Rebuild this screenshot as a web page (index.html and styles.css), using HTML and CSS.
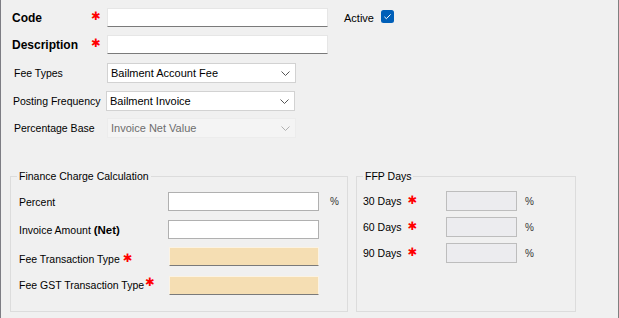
FILE: index.html
```html
<!DOCTYPE html>
<html>
<head>
<meta charset="utf-8">
<link rel="stylesheet" href="styles.css">
</head>
<body>
<div class="window">
  <div class="row row-code">
    <span class="lbl-main bold">Code</span>
    <span class="req req-main">✱</span>
    <span class="txt txt-main"></span>
    <span class="active-lbl">Active</span>
    <span class="chk">
      <svg width="13" height="13" viewBox="0 0 13 13"><rect x="0" y="0" width="13" height="13" rx="2.5" fill="#005fb8"/><path d="M3.4 6.8 L5.4 8.7 L9.6 4.4" fill="none" stroke="#fff" stroke-width="1"/></svg>
    </span>
  </div>
  <div class="row row-desc">
    <span class="lbl-main bold">Description</span>
    <span class="req req-main">✱</span>
    <span class="txt txt-main"></span>
  </div>

  <div class="row row-combo r1">
    <span class="lbl-combo">Fee Types</span>
    <span class="combo"><span class="combo-text">Bailment Account Fee</span><svg class="chev" width="9" height="5" viewBox="0 0 9 5"><path d="M0.5 0.5 L4.5 4.5 L8.5 0.5" fill="none" stroke="#555" stroke-width="1"/></svg></span>
  </div>
  <div class="row row-combo r2">
    <span class="lbl-combo pf">Posting Frequency</span>
    <span class="combo"><span class="combo-text">Bailment Invoice</span><svg class="chev" width="9" height="5" viewBox="0 0 9 5"><path d="M0.5 0.5 L4.5 4.5 L8.5 0.5" fill="none" stroke="#555" stroke-width="1"/></svg></span>
  </div>
  <div class="row row-combo r3">
    <span class="lbl-combo">Percentage Base</span>
    <span class="combo disabled"><span class="combo-text">Invoice Net Value</span><svg class="chev" width="9" height="5" viewBox="0 0 9 5"><path d="M0.5 0.5 L4.5 4.5 L8.5 0.5" fill="none" stroke="#b0b0b0" stroke-width="1"/></svg></span>
  </div>

  <div class="groups">
    <div class="group group-fin">
      <span class="legend">Finance Charge Calculation</span>
      <div class="grow g1">
        <span class="lbl-fin">Percent</span>
        <span class="txt txt-box"></span>
        <span class="pct">%</span>
      </div>
      <div class="grow g2">
        <span class="lbl-fin">Invoice Amount <b class="net">(Net)</b></span>
        <span class="txt txt-box"></span>
      </div>
      <div class="grow g3">
        <span class="lbl-fin low">Fee Transaction Type <span class="req">✱</span></span>
        <span class="txt txt-wheat"></span>
      </div>
      <div class="grow g4">
        <span class="lbl-fin">Fee GST Transaction Type<span class="req tight">✱</span></span>
        <span class="txt txt-wheat"></span>
      </div>
    </div>
    <div class="group group-ffp">
      <span class="legend">FFP Days</span>
      <div class="frow f1">
        <span class="lbl-ffp">30 Days <span class="req">✱</span></span>
        <span class="txt txt-ffp"></span>
        <span class="pct">%</span>
      </div>
      <div class="frow f2">
        <span class="lbl-ffp">60 Days <span class="req">✱</span></span>
        <span class="txt txt-ffp"></span>
        <span class="pct">%</span>
      </div>
      <div class="frow f3">
        <span class="lbl-ffp">90 Days <span class="req">✱</span></span>
        <span class="txt txt-ffp"></span>
        <span class="pct">%</span>
      </div>
    </div>
  </div>
</div>
</body>
</html>
```

FILE: styles.css
```css
html, body {
  margin: 0;
  padding: 0;
  background: #f0f0f0;
}
.window {
  width: 619px;
  height: 318px;
  box-sizing: border-box;
  border-left: 1px solid #7d7d84;
  border-right: 1px solid #808080;
  background: #f0f0f0;
  font-family: "Liberation Sans", Arial, sans-serif;
  font-size: 10.5px;
  color: #000;
  overflow: hidden;
}
.row {
  display: flex;
  align-items: center;
}
.bold {
  font-weight: bold;
  font-size: 12px;
}
.row-code {
  margin-top: 8px;
  height: 19px;
}
.row-desc {
  margin-top: 8px;
  height: 19px;
}
.lbl-main {
  width: 79px;
  padding-left: 11px;
  flex: none;
}
.req {
  color: #ff0000;
  font-family: "DejaVu Sans", sans-serif;
  font-size: 11.5px;
  font-weight: bold;
  position: relative;
  top: -1px;
  line-height: 1;
}
.req-main {
  width: 16px;
  flex: none;
}
.tight {
  margin-left: 1px;
  top: -3px;
}
.txt {
  display: block;
  box-sizing: border-box;
  flex: none;
}
.txt-main {
  width: 221px;
  height: 19px;
  background: #fff;
  border: 1px solid #e6e6e6;
  border-bottom: 1px solid #7a7a7a;
}
.active-lbl {
  margin-left: 16px;
  font-size: 11px;
}
.chk {
  display: block;
  margin-left: 7px;
  height: 13px;
  position: relative;
  top: -1px;
}
.chk svg { display: block; }

.row-combo {
  height: 20px;
}
.r1 { margin-top: 9px; }
.r2 { margin-top: 8px; }
.r3 { margin-top: 7px; }
.lbl-combo {
  width: 93px;
  padding-left: 13px;
  flex: none;
}
.lbl-combo.pf {
  padding-left: 12px;
}
.combo {
  width: 189px;
  height: 20px;
  box-sizing: border-box;
  background: #fff;
  border: 1px solid #d2d2d2;
  display: flex;
  align-items: center;
  justify-content: space-between;
  padding: 0 5px 0 3px;
  flex: none;
}
.combo-text {
  font-size: 11px;
}
.combo.disabled {
  background: #f4f4f4;
  border-color: #ececec;
  color: #6d6d6d;
}
.chev { display: block; }

.groups {
  display: flex;
  gap: 8px;
  margin-top: 38px;
  padding-left: 9px;
}
.group {
  position: relative;
  box-sizing: border-box;
  height: 136px;
  border: 1px solid #dcdcdc;
}
.group-fin {
  width: 338px;
  padding: 15px 0 0 8px;
}
.group-ffp {
  width: 220px;
  padding: 14px 0 0 6px;
}
.legend {
  position: absolute;
  top: -8px;
  left: 6px;
  padding: 0 2px;
  background: #f0f0f0;
  line-height: 14px;
}
.grow, .frow {
  display: flex;
  align-items: center;
}
.grow { height: 19px; }
.g2 { margin-top: 9px; }
.g3 { margin-top: 8px; }
.g4 { margin-top: 10px; }
.lbl-fin {
  width: 149px;
  flex: none;
  white-space: nowrap;
}
.lbl-fin.low {
  padding-top: 6px;
}
.net {
  font-size: 11.5px;
}
.txt-box {
  width: 151px;
  height: 19px;
  background: #fff;
  border: 1px solid #b0b0b0;
}
.txt-wheat {
  width: 150px;
  height: 19px;
  background: #f5deb3;
  border: 1px solid #fbf3e4;
  border-bottom: 1px solid #7a7a7a;
  margin-left: 1px;
}
.pct {
  margin-left: 11px;
  color: #333;
  font-size: 10px;
}
.frow { height: 20px; }
.f2, .f3 { margin-top: 6px; }
.lbl-ffp {
  width: 83px;
  flex: none;
}
.lbl-ffp .req { margin-left: 3px; }
.txt-ffp {
  width: 71px;
  height: 20px;
  background: #ececef;
  border: 1px solid #bdbdbd;
}
.group-ffp .pct {
  margin-left: 8px;
}
```
